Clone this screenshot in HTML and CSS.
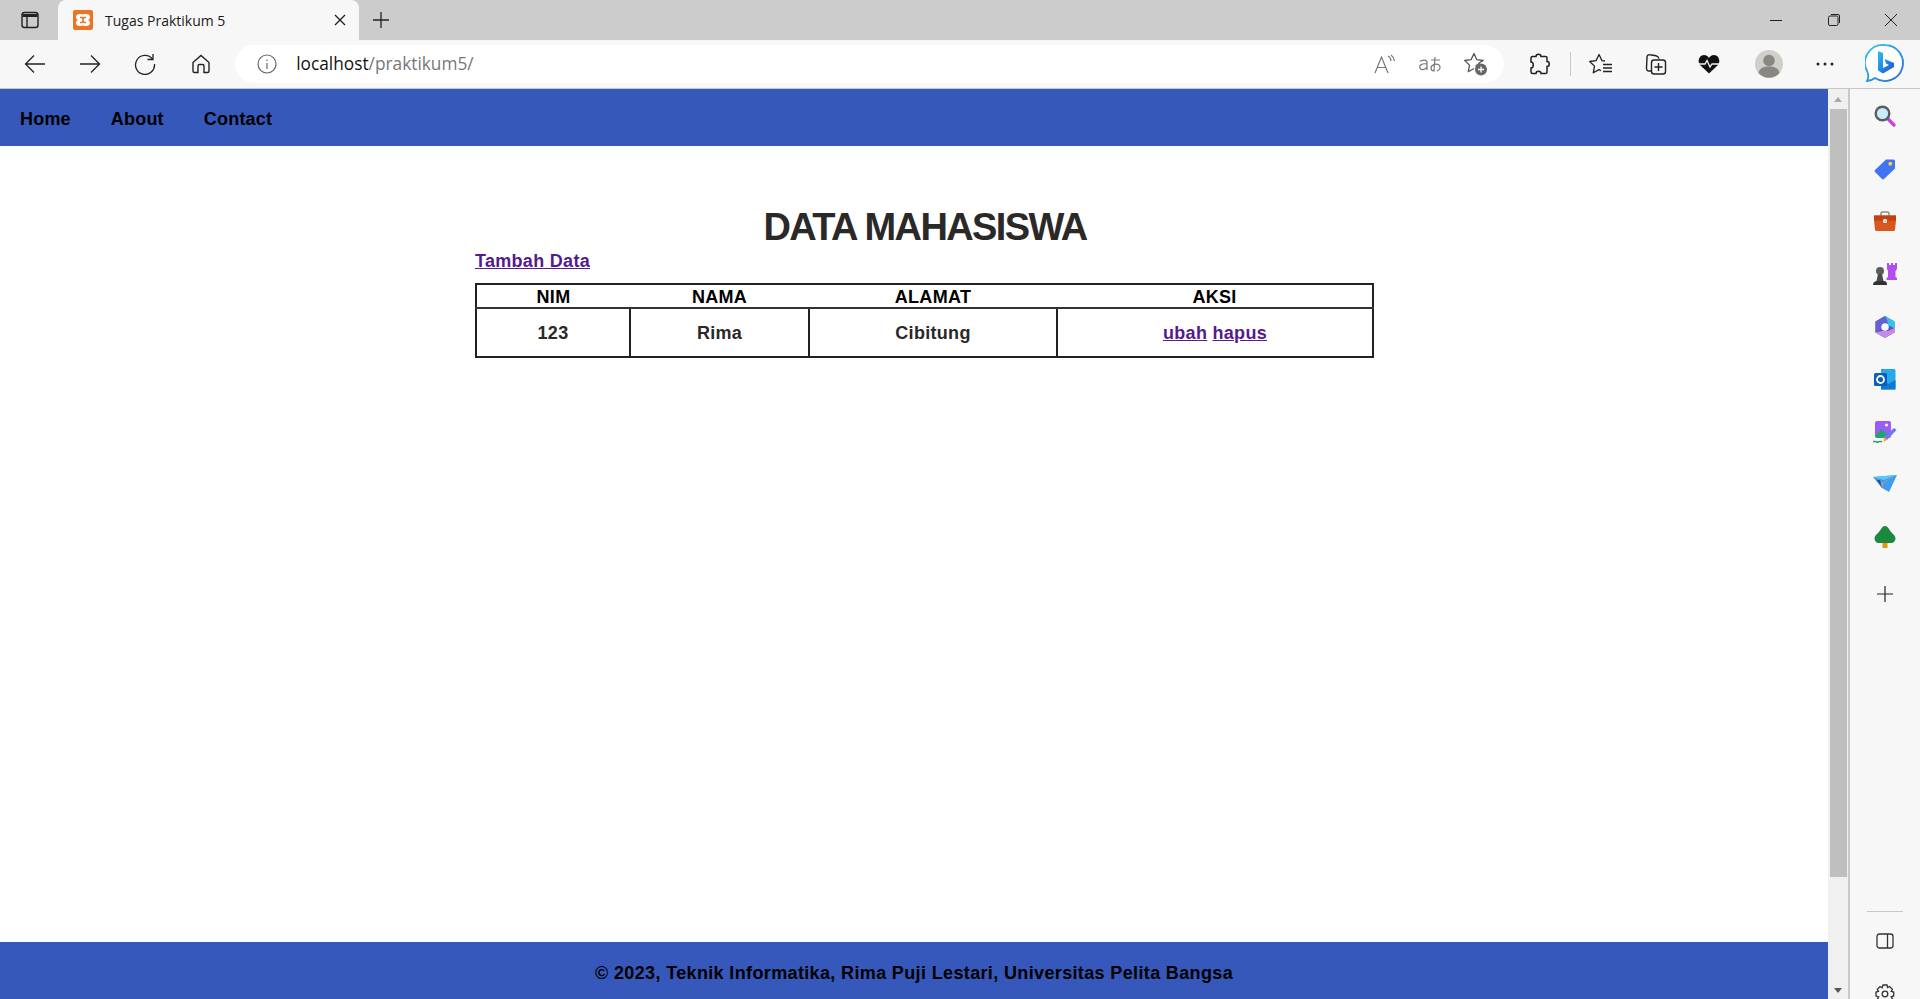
FILE: index.html
```html
<!DOCTYPE html>
<html lang="id">
<head>
<meta charset="utf-8">
<title>Tugas Praktikum 5</title>
<link rel="stylesheet" href="styles.css">
</head>
<body>
<header class="tabstrip">
  <div class="tabtoggle">
    <svg width="20" height="20" viewBox="0 0 20 20" fill="none" stroke="#222" stroke-width="1.4"><rect x="2" y="2.5" width="16" height="15" rx="2.5"/><path d="M2.5 5.5h15" stroke-width="3"/><path d="M7 6v11"/></svg>
  </div>
  <div class="tab">
    <svg class="favicon" width="20" height="20" viewBox="0 0 20 20"><rect width="20" height="20" rx="2" fill="#ee7322"/><path d="M6.500 4h2c1 0 1.500 .7 1.500 1.500 0-.8.500-1.500 1.500-1.500h2C16 4 17 5.500 17 7c0 1.500-.8 2.500-2 3 1.200.5 2 1.500 2 3 0 1.500-1 3-3.500 3h-2c-1 0-1.500-.7-1.500-1.500 0 .8-.5 1.500-1.500 1.500h-2C4 16 3 14.500 3 13c0-1.500.8-2.500 2-3-1.200-.5-2-1.500-2-3 0-1.500 1-3 3.500-3z" fill="#fff"/><path d="M7 7.500h1.500c1 0 1.500 1 1.500 2.500 0-1.500.5-2.500 1.500-2.500H13M7 12.500h1.500c1 0 1.500-1 1.500-2.500 0 1.500.5 2.500 1.500 2.500H13" stroke="#ee7322" stroke-width="1.500" fill="none"/></svg>
    <span class="tabtitle">Tugas Praktikum 5</span>
    <svg class="tabclose" width="12" height="12" viewBox="0 0 12 12" stroke="#222" stroke-width="1.400"><path d="M1 1l10 10M11 1L1 11"/></svg>
  </div>
  <div class="newtab">
    <svg width="18" height="18" viewBox="0 0 18 18" stroke="#222" stroke-width="1.300"><path d="M9 1v16M1 9h16"/></svg>
  </div>
  <div class="winctrls">
    <span class="winbtn"><svg width="14" height="14" viewBox="0 0 14 14" stroke="#222"><path d="M1 7.500h12"/></svg></span>
    <span class="winbtn"><svg width="14" height="14" viewBox="0 0 14 14" fill="none" stroke="#222"><rect x="1.500" y="3" width="9.500" height="9.500" rx="1.500"/><path d="M4 1.500h7a1.500 1.500 0 0 1 1.500 1.500v7"/></svg></span>
    <span class="winbtn"><svg width="14" height="14" viewBox="0 0 14 14" stroke="#222"><path d="M1 1l12 12M13 1L1 13"/></svg></span>
  </div>
</header>

<nav class="toolbar">
  <span class="tbtn"><svg width="22" height="20" viewBox="0 0 22 20" fill="none" stroke="#222" stroke-width="1.300"><path d="M21 10H1.500M10 1.500L1.500 10l8.500 8.500"/></svg></span>
  <span class="tbtn"><svg width="22" height="20" viewBox="0 0 22 20" fill="none" stroke="#222" stroke-width="1.300"><path d="M1 10h19.500M12 1.500l8.500 8.500-8.500 8.500"/></svg></span>
  <span class="tbtn"><svg width="22" height="22" viewBox="0 0 22 22" fill="none" stroke="#222" stroke-width="1.300"><path d="M18.500 6A9.500 9.500 0 1 0 20.500 11"/><path d="M19 1v5.500h-5.500"/></svg></span>
  <span class="tbtn"><svg width="20" height="20" viewBox="0 0 20 20" fill="none" stroke="#222" stroke-width="1.400"><path d="M2 8.500L10 1.500l8 7V17a1.500 1.500 0 0 1-1.500 1.500H13V12a1.500 1.500 0 0 0-1.500-1.500h-3A1.500 1.500 0 0 0 7 12v6.500H3.500A1.500 1.500 0 0 1 2 17z"/></svg></span>
  <div class="omnibox">
    <svg class="info" width="20" height="20" viewBox="0 0 20 20" fill="none" stroke="#666" stroke-width="1.200"><circle cx="10" cy="10" r="9"/><path d="M10 9v6"/><path d="M10 5.500v1.400"/></svg>
    <span class="url">localhost<span class="urlpath">/praktikum5/</span></span>
    <span class="omniicons">
      <svg width="22" height="20" viewBox="0 0 22 20" fill="none" stroke="#777" stroke-width="1.200"><path d="M1 19L7.500 3 14 19M3.500 13.500h8"/><path d="M14 2a6 6 0 0 1 3 5M17 1a9 9 0 0 1 3.500 6"/></svg>
      <svg width="24" height="18" viewBox="0 0 24 18" fill="none" stroke="#777" stroke-width="1.200"><path d="M2 6.500c2-2 7-2 7 1V15M9 9c-5-1-8 1-7 4 1 2.500 5 2 7-1"/><path d="M13 5h9M17 2l-1 14c-2 0-3-1-3-3 0-3 5-5 8-3 2 2 1 5-2 6"/></svg>
      <svg width="24" height="24" viewBox="0 0 24 24" fill="none" stroke="#555" stroke-width="1.300" stroke-linejoin="round"><path d="M12 14.800V14L16.500 10l2.800-1.500-6.600-.9L10 1.500 7.100 7.600.7 8.500l4.800 4.600-1.200 6.600 5.700-3.200"/><circle cx="17" cy="17.500" r="6" fill="#666" stroke="none"/><path d="M17 14.500v6M14 17.500h6" stroke="#fff"/></svg>
    </span>
  </div>
  <span class="tbtn ext"><svg width="22" height="22" viewBox="0 0 22 22" fill="none" stroke="#222" stroke-width="1.500"><path d="M8 3.500c0-3 5-3 5 0h4.500c1 0 1.500 .5 1.500 1.500v3.500c3 0 3 5 0 5V19c0 1-.5 1.500-1.500 1.500H13c0-3-5-3-5 0H4.500C3.500 20.500 3 20 3 19v-4c3 0 3-6 0-6V5c0-1 .5-1.500 1.500-1.500z"/></svg></span>
  <span class="sep"></span>
  <span class="tbtn fav"><svg width="24" height="22" viewBox="0 0 24 22" fill="none" stroke="#222" stroke-width="1.300" stroke-linejoin="round"><path d="M16 8l-3-.4L10 1.500 7.100 7.600.7 8.500l4.800 4.600-1.200 6.700 5.700-3.200 2 1.100"/><path d="M14 11.500h9M14 15h9M14 18.500h9"/></svg></span>
  <span class="tbtn"><svg width="22" height="22" viewBox="0 0 22 22" fill="none" stroke="#222" stroke-width="1.400"><path d="M6 18H4a2.500 2.500 0 0 1-2.500-2.800L2 4a2.500 2.500 0 0 1 3-2.300l6 1c1.500.3 2.500 1 3 3"/><rect x="6.500" y="7" width="14" height="14" rx="2.500"/><path d="M13.500 10v8M9.500 14h8"/></svg></span>
  <span class="tbtn heart"><svg width="22" height="22" viewBox="0 0 22 22"><path d="M11 20.500L2 12C-1 8 1.500 2 6 2c2 0 4 1 5 3 1-2 3-3 5-3 4.500 0 7 6 4 10z" fill="#111"/><path d="M1 11h6l2-3.500 3 6.500 2-3h7" fill="none" stroke="#f7f7f7" stroke-width="1.300"/></svg></span>
  <span class="tbtn profile"><svg width="28" height="28" viewBox="0 0 28 28"><circle cx="14" cy="14" r="14" fill="#d2cfcb"/><circle cx="14" cy="10.500" r="5.800" fill="#8a8783"/><path d="M3.500 23c1-5 5-6.500 10.500-6.500S23.500 18 24.500 23a14 14 0 0 1-21 0z" fill="#8a8783"/></svg></span>
  <span class="tbtn more"><svg width="18" height="4" viewBox="0 0 18 4" fill="#222"><circle cx="2" cy="2" r="1.500"/><circle cx="9" cy="2" r="1.500"/><circle cx="16" cy="2" r="1.500"/></svg></span>
  <span class="tbtn bing"><svg width="40" height="42" viewBox="0 0 40 42" fill="none"><defs><linearGradient id="bingring" x1="0" y1="0" x2="1" y2="1"><stop offset="0" stop-color="#37c6f0"/><stop offset="1" stop-color="#2468e0"/></linearGradient><linearGradient id="bingb" x1="0" y1="0" x2="1" y2="1"><stop offset="0" stop-color="#2ec0ee"/><stop offset="1" stop-color="#1a4fd8"/></linearGradient></defs><path d="M20 2a18 18 0 1 1-10 33c-2 1.500-5 3-8 3 1.500-2.500 1.500-6 .5-9A18 18 0 0 1 20 2z" fill="#fff" stroke="url(#bingring)" stroke-width="1.800"/><path d="M13 8l5 2v15l6-3-3-1.500-1.500-4.500 9.500 4v4l-11 6.500-5-3z" fill="url(#bingb)"/></svg></span>
</nav>

<div class="viewport">
  <div class="page">
    <ul class="menu">
      <li><a class="menulink" href="#">Home</a></li>
      <li><a class="menulink" href="#">About</a></li>
      <li><a class="menulink" href="#">Contact</a></li>
    </ul>
    <main class="content">
      <h1 class="title">DATA MAHASISWA</h1>
      <a class="link addlink" href="#">Tambah Data</a>
      <table class="datatable">
        <thead>
          <tr><th class="col-nim">NIM</th><th class="col-nama">NAMA</th><th class="col-alamat">ALAMAT</th><th>AKSI</th></tr>
        </thead>
        <tbody>
          <tr><td>123</td><td>Rima</td><td>Cibitung</td><td class="actions"><a class="link" href="#">ubah</a> <a class="link" href="#">hapus</a></td></tr>
        </tbody>
      </table>
    </main>
    <footer class="footer">© 2023, Teknik Informatika, Rima Puji Lestari, Universitas Pelita Bangsa</footer>
  </div>

  <div class="scrollbar">
    <span class="arrow-up"></span>
    <span class="thumb"></span>
    <span class="arrow-down"></span>
  </div>

  <aside class="sidebar">
    <span class="sicon"><svg width="22" height="22" viewBox="0 0 22 22"><path d="M13 13l7 7" stroke="#c93ee6" stroke-width="3.200" stroke-linecap="round"/><circle cx="8.500" cy="8.500" r="6.800" fill="#c9ecfa" stroke="#5d5d5d" stroke-width="2.400"/></svg></span>
    <span class="sicon"><svg width="22" height="22" viewBox="0 0 22 22"><path d="M12 1.500h7.500a1.500 1.500 0 0 1 1.500 1.500v7.500L10 21a1.500 1.500 0 0 1-2 0L1 14a1.500 1.500 0 0 1 0-2z" fill="#3f74f2"/><circle cx="16.300" cy="5.700" r="2" fill="#f3d04a"/></svg></span>
    <span class="sicon"><svg width="24" height="20" viewBox="0 0 24 20"><path d="M8 5V2.500A1.500 1.500 0 0 1 9.500 1h5A1.500 1.500 0 0 1 16 2.500V5" fill="none" stroke="#8b8b8b" stroke-width="1.500"/><path d="M1 4.500h22v5L22 18.500a1.500 1.500 0 0 1-1.500 1.500h-17A1.500 1.500 0 0 1 2 18.500L1 9.500z" fill="#d9571d"/><path d="M1 4.500h22v5H1z" fill="#c2410f"/><rect x="10" y="8" width="4" height="4" rx="1" fill="#d7d7d7"/></svg></span>
    <span class="sicon"><svg width="24" height="24" viewBox="0 0 24 24"><path d="M14 1h2v2h2V1h2v2h2V1h2v6l-1.500 2v6l1.500 1v2H13.500v-2l1.500-1V9l-1-2z" fill="#b24cf0"/><circle cx="7" cy="9" r="4" fill="#5c5c5c"/><path d="M5 12h4l1.500 7h-7z" fill="#4a4a4a"/><path d="M0 23c0-3 2-4 4-4h7c2 0 3 1 3 4z" fill="#333"/></svg></span>
    <span class="sicon"><svg width="22" height="24" viewBox="0 0 22 24"><path d="M11 1l9.500 5.500v11L11 23 1.500 17.500v-11z" fill="#4c58c8"/><path d="M11 1l9.500 5.500v7L14 10z" fill="#35c1e8"/><path d="M1.500 17.500L11 23l9.500-5.500V13L14 16H8z" fill="#c98ae6"/><path d="M1.500 6.500L11 1l3 6-7 2-1 6-4.500 2.500z" fill="#6a5fd0"/><circle cx="11" cy="12" r="3.800" fill="#f7f7f7"/></svg></span>
    <span class="sicon"><svg width="22" height="22" viewBox="0 0 22 22"><path d="M7 1h13a1.500 1.500 0 0 1 1.500 1.500V20a1.500 1.500 0 0 1-1.500 1.500H7z" fill="#28a8ea"/><path d="M7 12l7.500 4 7-4v9.500H7z" fill="#0f78d4"/><rect x="0" y="5" width="13" height="13" rx="1.500" fill="#0a5fb8"/><circle cx="6.500" cy="11.500" r="3.500" fill="none" stroke="#fff" stroke-width="1.800"/></svg></span>
    <span class="sicon"><svg width="24" height="24" viewBox="0 0 24 24"><rect x="2" y="1" width="16" height="17" rx="2" fill="#9a5cf5"/><path d="M2 16l6-7 6 5-4 4H4z" fill="#22a569"/><circle cx="13.500" cy="5" r="1.500" fill="#fff"/><path d="M11 17L21 8l2.500 2L14 20z" fill="#6a78f5"/><path d="M11 17l3 3-3.500 2z" fill="#f2a81d"/><path d="M0 22c2-2 3 1 5 0s3-1 4 0" fill="none" stroke="#1d9b5f" stroke-width="1.400"/></svg></span>
    <span class="sicon"><svg width="24" height="18" viewBox="0 0 24 18"><path d="M0 2l24-2-8 17-7-4z" fill="#3e9bf2"/><path d="M0 2l24-2-13 5z" fill="#5cc7f5"/><path d="M24 0L7 9l2 4 1-5z" fill="#f2a81d"/><path d="M4 5l5 8-2-8z" fill="#1c4f9e"/></svg></span>
    <span class="sicon"><svg width="22" height="22" viewBox="0 0 22 22"><rect x="8.500" y="16" width="5" height="6" fill="#e8930c"/><path d="M11 0c2 0 3 1.500 4 3 1 2 3 4 5 6 3 3 1 8-3 8H5C1 17-1 12 2 9c2-2 4-4 5-6 1-1.500 2-3 4-3z" fill="#1b8a3f"/></svg></span>
    <span class="sicon plus"><svg width="16" height="16" viewBox="0 0 16 16" stroke="#222" stroke-width="1.200"><path d="M8 0v16M0 8h16"/></svg></span>
    <span class="sspacer"></span>
    <span class="sdivider"></span>
    <span class="sicon panel"><svg width="18" height="16" viewBox="0 0 18 16" fill="none" stroke="#333" stroke-width="1.300"><rect x="1" y="1" width="16" height="14" rx="2.500"/><path d="M11.500 1v14"/></svg></span>
    <span class="sicon gear"><svg width="20" height="20" viewBox="0 0 20 20" fill="none" stroke="#333" stroke-width="1.300"><path d="M8 1h4l.6 2.500 2-1 2.800 2.800-1.200 2.100 2.500.6v4l-2.500.6 1.200 2.100-2.800 2.800-2.100-1.200L12 19H8l-.6-2.500-2.100 1.200-2.800-2.800 1.200-2.100L1 12V8l2.500-.6-1.200-2.100 2.800-2.800 2.100 1.200z"/><circle cx="10" cy="10" r="2.800"/></svg></span>
  </aside>
</div>
</body>
</html>
```

FILE: styles.css
```css
* { box-sizing: border-box; }
html, body { margin: 0; height: 100%; overflow: hidden; }
body {
  display: flex;
  flex-direction: column;
  height: 999px;
  font-family: "Liberation Sans", Arial, sans-serif;
  background: #fff;
}

/* Browser chrome */
.tabstrip {
  height: 40px;
  flex: none;
  display: flex;
  align-items: center;
  background: #cccccc;
}
.tabtoggle { width: 58px; padding-left: 20px; display: flex; }
.tab {
  width: 301px;
  height: 40px;
  background: #f7f7f7;
  border-radius: 8px 8px 0 0;
  display: flex;
  align-items: center;
  padding: 0 12px 0 15px;
}
.favicon { flex: none; }
.tabtitle {
  margin-left: 12px;
  flex: 1;
  font: 14px "Open Sans", "Noto Sans", sans-serif;
  color: #1a1a1a;
}
.tabclose { flex: none; margin-right: 1px; }
.newtab { margin-left: 13px; display: flex; }
.winctrls { margin-left: auto; display: flex; }
.winbtn { width: 57.5px; height: 40px; display: flex; align-items: center; justify-content: center; }

.toolbar {
  height: 49px;
  flex: none;
  display: flex;
  align-items: center;
  padding-left: 7px;
  background: #f7f7f7;
  border-bottom: 1px solid #c6c6c6;
}
.tbtn {
  width: 55.3px;
  height: 40px;
  flex: none;
  display: flex;
  align-items: center;
  justify-content: center;
}
.omnibox {
  width: 1269px;
  height: 38px;
  margin-left: 7px;
  flex: none;
  background: #fff;
  border-radius: 19px;
  display: flex;
  align-items: center;
  padding: 0 16px 0 22px;
}
.info { flex: none; }
.url {
  margin-left: 19px;
  margin-top: -2px;
  font: 17.3px "Open Sans", "Noto Sans", sans-serif;
  color: #111;
}
.urlpath { color: #777; }
.omniicons { margin-left: auto; display: flex; align-items: center; gap: 22px; }
.ext { margin-left: 7px; }
.sep { width: 1px; height: 24px; background: #c8c8c8; margin-left: 4px; }
.fav { margin-left: 2px; }
.heart { margin-left: -2.5px; }
.profile { margin-left: 4px; }
.more { margin-left: 1px; }
.bing { margin-left: 5px; }

/* Page */
.viewport { flex: 1; min-height: 0; display: flex; }
.page { width: 1828px; flex: none; display: flex; flex-direction: column; }
.menu {
  list-style: none;
  margin: 0;
  padding: 4px 0 0 20px;
  height: 57px;
  flex: none;
  display: flex;
  align-items: center;
  gap: 40px;
  background: #3558ba;
}
.menulink {
  color: #000;
  text-decoration: none;
  font-size: 18px;
  font-weight: 700;
  letter-spacing: 0.2px;
}
.content {
  flex: 1;
  width: 900px;
  margin-left: 475px;
  color: #2b2828;
}
.title {
  margin: 58.5px 0 0;
  font-size: 38px;
  line-height: 44px;
  font-weight: 700;
  letter-spacing: -1.6px;
  text-align: center;
  color: #2b2828;
}
.link { color: #551a8b; font-size: 18px; font-weight: 700; letter-spacing: 0.3px; }
.addlink { display: block; line-height: 21px; margin-top: 2px; }
.datatable {
  width: 899px;
  margin-top: 11px;
  border-collapse: collapse;
  border: 2px solid #222;
  table-layout: fixed;
  text-align: center;
}
.datatable th {
  height: 24px;
  padding: 2px 0 0;
  font-size: 18px;
  line-height: 20px;
  letter-spacing: 0.3px;
  color: #000;
  border-bottom: 2px solid #333;
}
.datatable td {
  height: 49px;
  padding: 2px 0 0;
  font-size: 18px;
  font-weight: 700;
  letter-spacing: 0.3px;
  border: 2px solid #222;
}
.col-nim { width: 154px; }
.col-nama { width: 179px; }
.col-alamat { width: 248px; }
.footer {
  height: 57px;
  flex: none;
  padding-top: 5px;
  background: #3558ba;
  color: #000;
  font-size: 18px;
  font-weight: 700;
  letter-spacing: 0.36px;
  text-align: center;
  line-height: 52px;
}

/* Scrollbar */
.scrollbar {
  width: 22px;
  flex: none;
  display: flex;
  flex-direction: column;
  align-items: flex-start;
  background: #f0f0f0;
  border-right: 2px solid #c8c8c8;
}
.thumb {
  width: 17px;
  height: 768px;
  margin: 7px 0 0 2px;
  background: #bfbfbf;
}
.arrow-up, .arrow-down {
  width: 0;
  height: 0;
  margin-left: 6px;
  border-left: 4.5px solid transparent;
  border-right: 4.5px solid transparent;
}
.arrow-up { margin-top: 8px; border-bottom: 5px solid #a8a8a8; }
.arrow-down { margin-top: auto; margin-bottom: 6px; border-top: 5px solid #555; }

/* Sidebar */
.sidebar {
  flex: 1;
  background: #f7f7f7;
  display: flex;
  flex-direction: column;
  align-items: center;
  padding-top: 1px;
  overflow: hidden;
}
.sicon {
  height: 52.6px;
  flex: none;
  display: flex;
  align-items: center;
  justify-content: center;
}
.plus { margin-top: 4px; }
.sspacer { flex: 1; }
.sdivider { width: 36px; height: 1px; flex: none; background: #c8c8c8; margin-bottom: 3px; }
.panel { height: 52px; margin-bottom: 8px; }
.gear { height: 38px; margin-bottom: -14px; }
```
